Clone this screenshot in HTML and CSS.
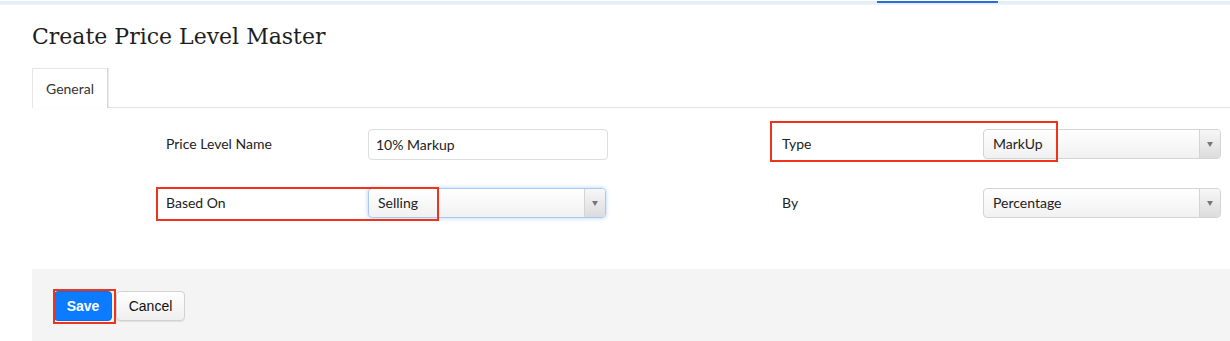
FILE: index.html
```html
<!DOCTYPE html>
<html lang="en">
<head>
    <meta charset="UTF-8">
    <title>Create Price Level Master</title>
    <link rel="stylesheet" href="styles.css">
</head>
<body>

    <div class="topbar">
        <span class="topbar-active"></span>
    </div>

    <div class="page">
        <h1 class="title">Create Price Level Master</h1>

        <div class="tabs">
            <div class="tab active">General</div>
        </div>

        <div class="form">
            <div class="field">
                <label>Price Level Name</label>
                <input class="text-input" type="text" value="10% Markup">
            </div>
            <div class="field">
                <label>Type</label>
                <div class="select narrow">
                    <span class="select-value">MarkUp</span>
                    <span class="select-arrow"></span>
                </div>
                <span class="mark mark-type"></span>
            </div>
            <div class="field">
                <label>Based On</label>
                <div class="select focused">
                    <span class="select-value">Selling</span>
                    <span class="select-arrow"></span>
                </div>
                <span class="mark mark-based"></span>
            </div>
            <div class="field">
                <label>By</label>
                <div class="select narrow">
                    <span class="select-value">Percentage</span>
                    <span class="select-arrow"></span>
                </div>
            </div>
        </div>

        <div class="actions">
            <div class="save-wrap">
                <button class="btn btn-save">Save</button>
                <span class="mark mark-save"></span>
            </div>
            <button class="btn btn-cancel">Cancel</button>
        </div>
    </div>

</body>
</html>
```

FILE: styles.css
```css
body {
    margin: 0;
    padding: 0;
    background-color: #fff;
    font-family: Lato, "Open Sans", sans-serif;
    color: #222;
    overflow: hidden;
}

.topbar {
    height: 3px;
    background-color: #e4eef9;
    border-bottom: 1px solid #edf3fa;
}

.topbar-active {
    display: block;
    margin-left: 877px;
    width: 121px;
    height: 2px;
    margin-top: 1px;
    background-color: #2b6fd6;
}

.page {
    padding-left: 32px;
}

.title {
    margin: 0;
    padding-top: 18px;
    font-family: "DejaVu Serif", serif;
    font-weight: normal;
    font-size: 22px;
    line-height: 28px;
    color: #1e1e1e;
}

.tabs {
    display: flex;
    margin-top: 17px;
    border-bottom: 1px solid #e2e2e2;
}

.tab {
    padding: 0 13px;
    height: 39px;
    line-height: 39px;
    font-size: 14px;
    color: #333;
    background-color: #fff;
    border: 1px solid #e6e6e6;
    border-right-color: #d6d6d6;
    border-bottom: none;
    margin-bottom: -1px;
    box-shadow: 1px 0 1px rgba(0,0,0,0.08);
}

.form {
    display: grid;
    grid-template-columns: 616px 1fr;
    row-gap: 29px;
    padding: 21px 0 51px 134px;
}

.field {
    position: relative;
    display: grid;
    grid-template-columns: 202px auto;
    align-items: center;
    height: 30px;
}

.field label {
    font-size: 14px;
    color: #222;
    margin-top: -2px;
}

.text-input {
    box-sizing: border-box;
    width: 240px;
    height: 31px;
    padding: 0 7px;
    border: 1px solid #dedede;
    border-radius: 4px;
    font-family: Lato, sans-serif;
    font-size: 14px;
    color: #222;
    outline: none;
}

.select {
    box-sizing: border-box;
    display: flex;
    width: 238px;
    height: 30px;
    border: 1px solid #d4d4d4;
    border-radius: 4px;
    background: linear-gradient(#fff, #f1f1f1);
}

.select.narrow {
    width: 238px;
    margin-left: -1px;
}

.select.focused {
    border-color: #a9c9f2;
    box-shadow: 0 0 4px rgba(80,150,240,0.45);
}

.select-value {
    flex: 1;
    padding-left: 9px;
    line-height: 27px;
    font-size: 14px;
    color: #222;
}

.select-arrow {
    position: relative;
    width: 20px;
    border-left: 1px solid #d4d4d4;
    border-radius: 0 3px 3px 0;
    background: linear-gradient(#f7f7f7, #dcdcdc);
}

.select-arrow::after {
    content: "";
    position: absolute;
    left: 7px;
    top: 12px;
    border-left: 3px solid transparent;
    border-right: 3px solid transparent;
    border-top: 5px solid #777;
}

.mark {
    position: absolute;
    border: 2px solid #f0341c;
    box-sizing: border-box;
    pointer-events: none;
}

.mark-type {
    left: -12px;
    top: -8px;
    width: 288px;
    height: 41px;
}

.mark-based {
    left: -10px;
    top: -1px;
    width: 283px;
    height: 34px;
}

.actions {
    display: flex;
    gap: 4px;
    align-items: flex-start;
    height: 51px;
    padding: 22px 0 0 22px;
    background-color: #f4f4f4;
}

.save-wrap {
    position: relative;
}

.btn {
    display: block;
    height: 30px;
    border-radius: 4px;
    font-family: "Liberation Sans", Arial, sans-serif;
    font-size: 14px;
    cursor: pointer;
}

.btn-save {
    width: 58px;
    border: 1px solid #0a6fe8;
    background-color: #0b7bff;
    color: white;
    font-weight: bold;
}

.btn-cancel {
    width: 69px;
    border: 1px solid #d2d2d2;
    background: linear-gradient(#fff, #efefef);
    color: #111;
    box-shadow: 0 1px 1px rgba(0,0,0,0.08);
}

.mark-save {
    left: -1px;
    top: -2px;
    width: 63px;
    height: 35px;
}
```
